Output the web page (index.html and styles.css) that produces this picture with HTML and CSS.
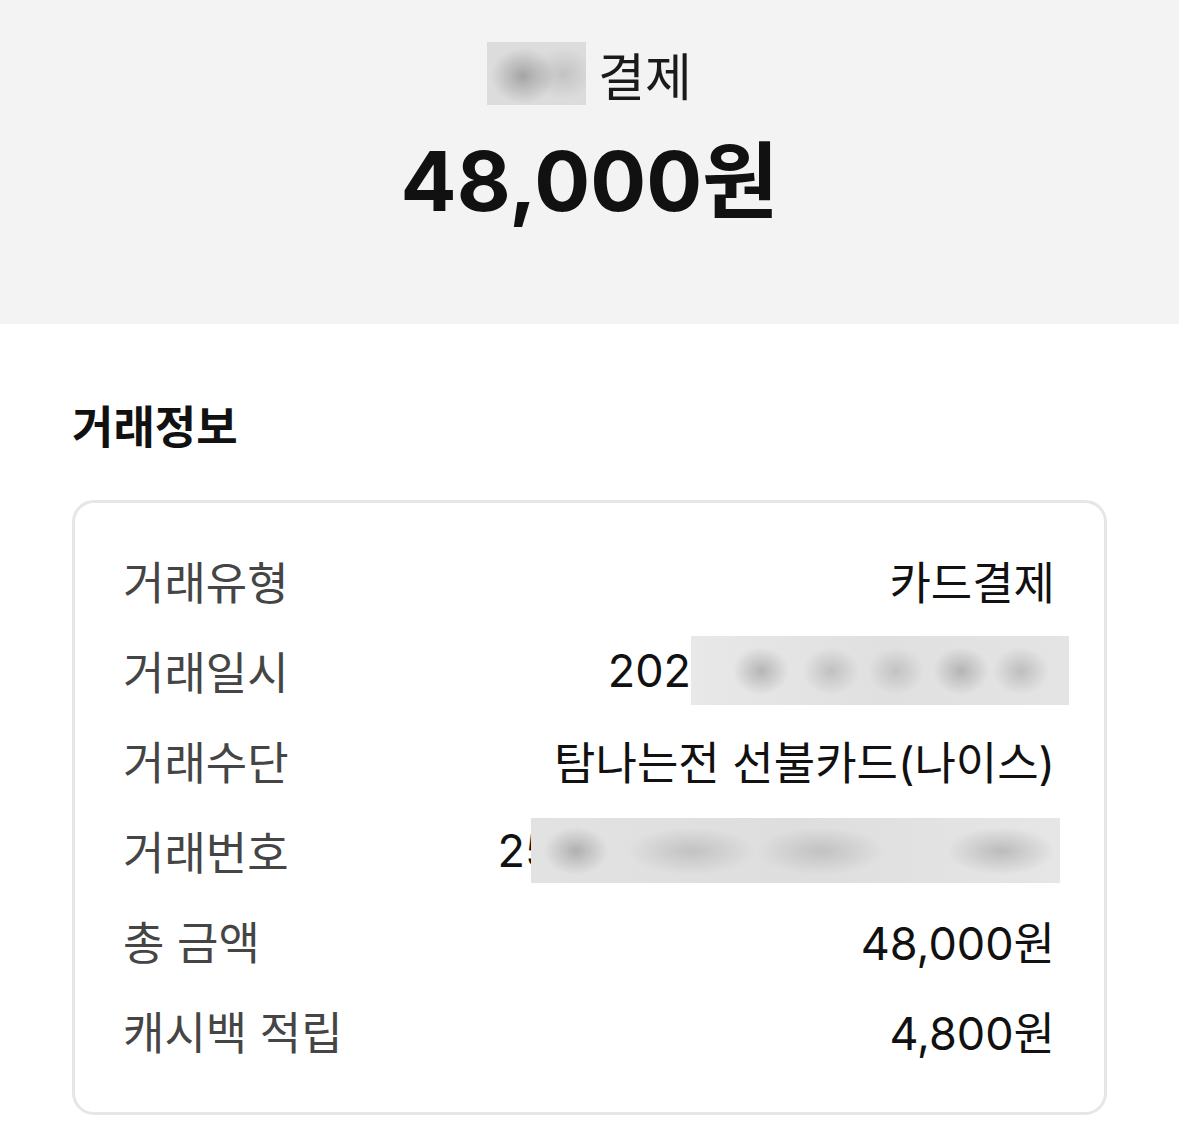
FILE: index.html
```html
<!DOCTYPE html>
<html lang="ko">
<head>
<meta charset="utf-8">
<link rel="stylesheet" href="styles.css">
</head>
<body>
<header class="summary">
  <div class="summary-title">
    <span class="blur blur-name"></span>
    <span class="title-text">결제</span>
  </div>
  <div class="summary-amount">48,000원</div>
</header>
<main class="section">
  <h2 class="section-title">거래정보</h2>
  <div class="card">
    <div class="row"><span class="label">거래유형</span><span class="value">카드결제</span></div>
    <div class="row"><span class="label">거래일시</span><span class="value"><span>202</span><span class="blur blur-date"></span></span></div>
    <div class="row"><span class="label">거래수단</span><span class="value">탐나는전 선불카드(나이스)</span></div>
    <div class="row"><span class="label">거래번호</span><span class="value"><span>2</span><span class="clip">5</span><span class="blur blur-no"></span></span></div>
    <div class="row"><span class="label">총 금액</span><span class="value">48,000원</span></div>
    <div class="row"><span class="label">캐시백 적립</span><span class="value">4,800원</span></div>
  </div>
</main>
</body>
</html>
```
FILE: styles.css
```css
html, body {
  margin: 0;
  padding: 0;
  background: #ffffff;
  font-family: "Inter", "Noto Sans CJK KR", "Noto Sans", sans-serif;
  color: #111111;
}

.summary {
  background: #f3f3f3;
  height: 324px;
  box-sizing: border-box;
  padding-top: 42px;
  display: flex;
  flex-direction: column;
  align-items: center;
}

.summary-title {
  display: flex;
  align-items: center;
  gap: 12px;
  height: 63px;
}

.title-text {
  font-size: 51px;
  line-height: 63px;
  color: #1a1a1a;
  position: relative;
  top: 4px;
}

.blur {
  display: inline-block;
  overflow: hidden;
}

.blur-name {
  width: 99px;
  height: 63px;
  background:
    radial-gradient(ellipse 32px 28px at 36px 34px, rgba(150,150,150,0.8), rgba(150,150,150,0) 100%),
    radial-gradient(ellipse 32px 26px at 76px 32px, rgba(175,175,175,0.55), rgba(175,175,175,0) 100%),
    #dcdcdc;
}

.summary-amount {
  font-size: 83px;
  font-weight: 700;
  line-height: 100px;
  margin-top: 26px;
  color: #111111;
}

.section {
  padding: 76px 72px 20px 72px;
}

.section-title {
  margin: 0;
  font-size: 45px;
  font-weight: 700;
  line-height: 56px;
  color: #111111;
}

.card {
  margin-top: 44px;
  border: 3px solid #e6e6e6;
  border-radius: 22px;
  padding: 32px 49px 37px 48px;
}

.row {
  display: flex;
  justify-content: space-between;
  align-items: center;
  height: 90px;
  font-size: 45px;
}

.label {
  color: #454545;
}

.value {
  color: #111111;
  display: flex;
  align-items: center;
}

.clip {
  display: inline-block;
  width: 6px;
  overflow: hidden;
}

.blur-date {
  width: 378px;
  height: 69px;
  margin-right: -14px;
  background:
    radial-gradient(ellipse 28px 24px at 70px 35px, rgba(165,165,165,0.75), rgba(165,165,165,0) 100%),
    radial-gradient(ellipse 28px 24px at 140px 35px, rgba(170,170,170,0.6), rgba(170,170,170,0) 100%),
    radial-gradient(ellipse 28px 24px at 205px 35px, rgba(170,170,170,0.55), rgba(170,170,170,0) 100%),
    radial-gradient(ellipse 28px 24px at 270px 35px, rgba(165,165,165,0.75), rgba(165,165,165,0) 100%),
    radial-gradient(ellipse 28px 24px at 330px 35px, rgba(170,170,170,0.65), rgba(170,170,170,0) 100%),
    linear-gradient(90deg, #e8e8e8, #e0e0e0 50%, #e4e4e4);
}

.blur-no {
  width: 529px;
  height: 65px;
  margin-right: -5px;
  background:
    radial-gradient(ellipse 32px 24px at 45px 33px, rgba(160,160,160,0.75), rgba(160,160,160,0) 100%),
    radial-gradient(ellipse 64px 24px at 160px 33px, rgba(170,170,170,0.55), rgba(170,170,170,0) 100%),
    radial-gradient(ellipse 64px 24px at 290px 33px, rgba(170,170,170,0.55), rgba(170,170,170,0) 100%),
    radial-gradient(ellipse 54px 24px at 470px 33px, rgba(165,165,165,0.65), rgba(165,165,165,0) 100%),
    linear-gradient(90deg, #e2e2e2, #dedede 50%, #e6e6e6);
}
```
